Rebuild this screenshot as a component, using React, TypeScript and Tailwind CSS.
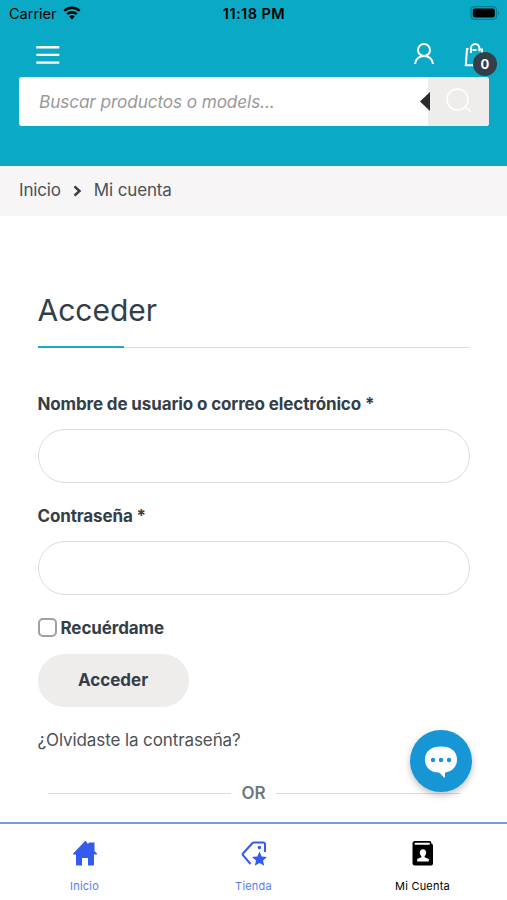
import React from 'react';

const StatusBar: React.FC = () => (
  <div className="grid h-7 grid-cols-3 items-center pl-[9px] pr-[7px] text-black">
    <div className="flex items-center gap-[6px]">
      <span className="text-[14.5px]">Carrier</span>
      <svg className="-mt-[2px]" width="18" height="14" viewBox="0 0 19 15" fill="none" stroke="currentColor" strokeWidth="2.6">
        <path d="M1.3 5.3a11.7 11.7 0 0 1 16.4 0" />
        <path d="M4.4 8.7a7.3 7.3 0 0 1 10.2 0" />
        <path d="M9.5 14.5 6.6 11.3a4.2 4.2 0 0 1 5.8 0z" fill="currentColor" stroke="none" />
      </svg>
    </div>
    <span className="-ml-px text-center text-[14.5px] font-semibold tracking-[0.45px]">11:18 PM</span>
    <svg className="-mt-[2px] justify-self-end" width="30" height="14" viewBox="0 0 30 14">
      <rect x="1" y="0.7" width="25.5" height="12.6" rx="3.5" fill="none" stroke="#087d91" strokeWidth="1.2" />
      <rect x="2.8" y="2.5" width="22" height="9" rx="2" fill="#000" />
      <path d="M28 4.8c1.4.4 1.4 4 0 4.4z" fill="#087d91" />
    </svg>
  </div>
);

const Header: React.FC = () => (
  <header className="h-[166px] bg-[#0aaac7]">
    <StatusBar />
    <div className="flex h-[49px] items-start justify-between pl-9 pr-[10px] pt-[14px]">
      <button aria-label="Menu" className="mt-[3px]">
        <svg width="24" height="20" viewBox="0 0 24 20" stroke="white" strokeWidth="2.4">
          <path d="M.3 2.200h23M.3 9.900h23M.3 17.600h23" />
        </svg>
      </button>
      <div className="flex">
        <svg className="mr-7" width="22" height="24" viewBox="0 0 22 24" fill="none" stroke="white" strokeWidth="2">
          <circle cx="11" cy="8" r="6" />
          <path d="M2 22c.3-4.800 4-8 9-8s8.700 3.200 9 8" />
        </svg>
        <div className="relative h-9 w-[34px]">
          <svg width="23" height="25" viewBox="0 0 23 25" fill="none" stroke="white" strokeWidth="2">
            <path d="M5.500 7H4L2.800 23.200H20L19 7.500H15.500M9.500 8h4" />
            <path d="M8 11V6.200a4.200 4.200 0 0 1 8.400 0v3" />
          </svg>
          <span className="absolute left-[10px] top-[10px] flex size-[24px] items-center justify-center rounded-full bg-[#333e48] pt-px text-[13px] font-bold text-white">
            0
          </span>
        </div>
      </div>
    </div>
    <form className="ml-[19px] mr-[18px] flex h-[49px] overflow-hidden rounded-[3px] bg-white">
      <div className="flex flex-1 items-center pl-5">
        <span className="text-[17.200px] italic tracking-[-0.100px] text-[#999]">Buscar productos o models...</span>
      </div>
      <div className="relative flex w-[61px] items-center justify-center bg-[#efecec]">
        <svg className="absolute -left-2 top-[15px]" width="10" height="19" viewBox="0 0 10 19">
          <path d="M10 0v19L0 9.500z" fill="#2b2b2b" />
        </svg>
        <svg className="-mt-1" width="26" height="26" viewBox="0 0 26 26" fill="none" stroke="white" strokeWidth="1.4">
          <circle cx="11.500" cy="12.500" r="10.500" />
          <path d="m18.800 19.500 6 5.500" />
        </svg>
      </div>
    </form>
  </header>
);

const Breadcrumb: React.FC = () => (
  <nav className="flex h-[50px] items-center bg-[#f7f5f6] pl-[19px] text-[17px] tracking-[-0.150px] text-[#4b5157]">
    <span>Inicio</span>
    <svg className="-mt-px ml-3 mr-[12px]" width="9" height="12" viewBox="0 0 9 12" fill="none" stroke="#333e48" strokeWidth="2.500">
      <path d="m1.500 1.300 5 4.700-5 4.700" />
    </svg>
    <span>Mi cuenta</span>
  </nav>
);

const Field: React.FC<{ label: string; type: string }> = ({ label, type }) => (
  <label className="block pb-5 pt-px text-[17px] font-bold leading-[25px] tracking-[-0.130px] text-[#333e48]">
    {label} *
    <input type={type} className="mt-[12px] block h-[54px] w-full rounded-full border border-[#dddddd] px-6 outline-none" />
  </label>
);

const LoginForm: React.FC = () => (
  <main className="flex-1 px-[37.500px] pt-[72px]">
    <h2 className="flex h-[60px] items-start border-b border-[#dddddd] text-[30px] leading-[45px] text-[#333e48]">
      <span className="h-[60px] w-[86px] whitespace-nowrap border-b-2 border-[#1ba9c6]">Acceder</span>
    </h2>
    <form className="pt-[43px]">
      <Field label="Nombre de usuario o correo electrónico" type="text" />
      <Field label="Contraseña" type="password" />
      <label className="flex h-[25px] items-center gap-[4px] text-[17px] font-bold tracking-[-0.100px] text-[#333e48]">
        <input type="checkbox" className="size-[19px] appearance-none rounded-[5px] border-2 border-[#a0a0a0] bg-white" />
        <span className="pt-[2px]">Recuérdame</span>
      </label>
      <button type="button" className="mt-[14px] block h-[53px] w-[151px] rounded-full bg-[#efecec] text-[17px] font-bold text-[#333e48]">
        Acceder
      </button>
    </form>
    <p className="mt-[21px] text-[17px] leading-[25px] tracking-[-0.100px] text-[#4b5157]">¿Olvidaste la contraseña?</p>
    <div className="mx-[10px] mt-[28px] flex items-center gap-[10px] text-[17px] font-semibold leading-6 text-[#70767b]">
      <span className="h-px flex-1 bg-[#dddddd]" />
      OR
      <span className="h-px flex-1 bg-[#dddddd]" />
    </div>
  </main>
);

const ChatButton: React.FC = () => (
  <button aria-label="Chat" className="absolute left-[410px] top-[730px] flex size-[62px] items-center justify-center rounded-full bg-[#1696d4] shadow-[0_3px_7px_rgba(0,0,0,0.25)]">
    <svg width="34" height="34" viewBox="0 0 34 34">
      <path d="M17 2.500C7 2.500 1 7.200 1 15.500c0 7.500 5 12.700 13.500 13.100 2.500.4 3.300 3.500 6.300 5.400l.3-5.600C28.500 27.300 33 22.500 33 15.500 33 7.200 27 2.500 17 2.500z" fill="white" />
      <circle cx="9" cy="16" r="2.200" fill="#1696d4" />
      <circle cx="17" cy="16" r="2.200" fill="#1696d4" />
      <circle cx="25" cy="16" r="2.200" fill="#1696d4" />
    </svg>
  </button>
);

const tabs = [
  {
    label: 'Inicio',
    color: 'text-[#5b7cf0]',
    icon: <path d="M12.800 1.200 1.200 13.500c-.4.500-.1 1 .5 1H4V24.600c0 .6.300.9.900.9H10V18h6v7.500h5.100c.6 0 .9-.3.900-.9V14.500h2.400c.6 0 .9-.5.5-1L22.500 11V2.500h-5l-1.700 1.300-1.600-2.200c-.4-.5-.9-.9-1.400-.4z" fill="#345bf0" />,
  },
  {
    label: 'Tienda',
    color: 'text-[#5b7cf0]',
    icon: (
      <g className="text-[#345bf0]">
        <path d="M9.500 24 2.200 15.400a1.600 1.600 0 0 1 0-2.200L11.500 3c.4-.4.900-.6 1.400-.6H22a2 2 0 0 1 2 2V12" fill="none" stroke="currentColor" strokeWidth="2" />
        <circle cx="18.400" cy="7.500" r="1.700" fill="currentColor" />
        <path d="m18.500 11.500 2.200 4.900 5.300.5-4 3.500 1.200 5.300-4.700-2.800-4.700 2.800 1.200-5.300-4-3.500 5.300-.5z" fill="currentColor" />
      </g>
    ),
  },
  {
    label: 'Mi Cuenta',
    color: 'text-black',
    icon: (
      <>
        <path d="M5 1h14.500a2 2 0 0 1 1.700 2.500c1.100.3 1.800 1.200 1.800 2.300V23.500a2 2 0 0 1-2 2H5a2.500 2.500 0 0 1-2.500-2.500V3.500A2.500 2.500 0 0 1 5 1z" fill="currentColor" />
        <path d="M5.500 2.800H19a.8.800 0 0 1 0 1.900H5.500a.8.800 0 0 1 0-1.900z" fill="white" />
        <path d="M13 9.300c2 0 3.200 1.400 3.200 3.300 0 1.500-.7 2.900-1.600 3.600v1.100l4.200 1.700v2.600H7.200V19l4.200-1.700v-1.100c-.9-.7-1.600-2.100-1.600-3.600 0-1.900 1.200-3.300 3.200-3.300z" fill="white" />
      </>
    ),
  },
];

const BottomNav: React.FC = () => (
  <nav className="grid h-[78px] grid-cols-3 border-t-2 border-[#7897e6] bg-white">
    {tabs.map(({ label, color, icon }) => (
      <a key={label} className={`flex flex-col items-center pt-[16px] ${color}`}>
        <svg width="26" height="26" viewBox="0 0 26 26">{icon}</svg>
        <span className="mt-[12px] text-[11px] leading-4 tracking-[0.200px]">{label}</span>
      </a>
    ))}
  </nav>
);

const App: React.FC = () => (
  <div className="relative flex h-[900px] w-full flex-col overflow-hidden bg-white font-[Inter,sans-serif]">
    <Header />
    <Breadcrumb />
    <LoginForm />
    <BottomNav />
    <ChatButton />
  </div>
);

export default App;
